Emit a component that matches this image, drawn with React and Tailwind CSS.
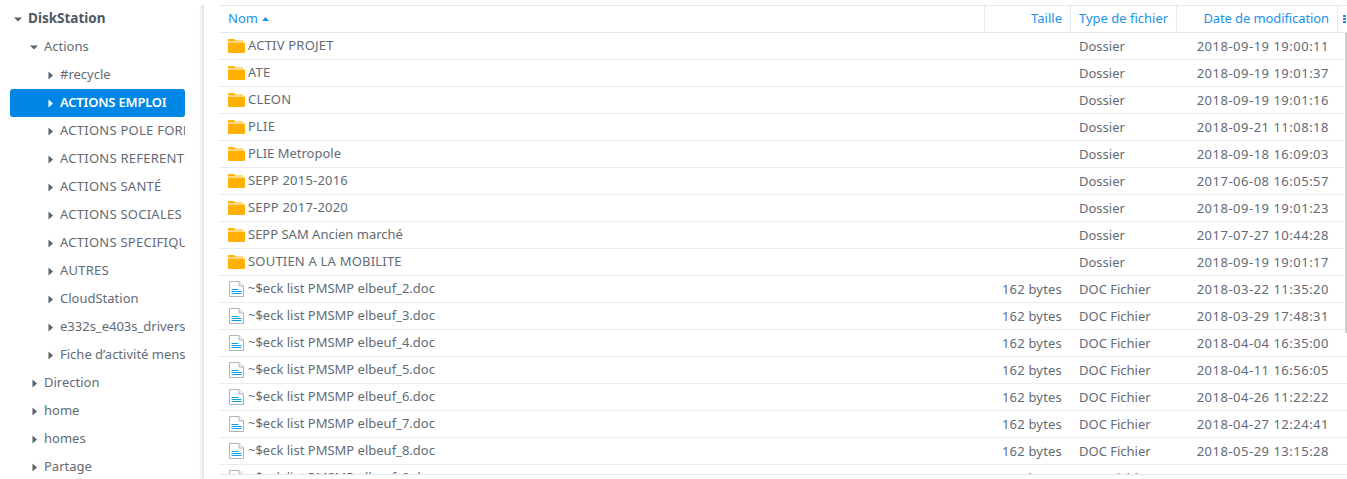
import { useState } from "react";

const tree = [
  { label: "Actions", depth: 1, open: true },
  { label: "#recycle", depth: 2 },
  { label: "ACTIONS EMPLOI", depth: 2, active: true },
  { label: "ACTIONS POLE FORMATION", depth: 2 },
  { label: "ACTIONS REFERENTS", depth: 2 },
  { label: "ACTIONS SANTÉ", depth: 2 },
  { label: "ACTIONS SOCIALES", depth: 2 },
  { label: "ACTIONS SPECIFIQUES", depth: 2 },
  { label: "AUTRES", depth: 2 },
  { label: "CloudStation", depth: 2 },
  { label: "e332s_e403s_drivers", depth: 2 },
  { label: "Fiche d’activité mensuelle", depth: 2 },
  { label: "Direction", depth: 1 },
  { label: "home", depth: 1 },
  { label: "homes", depth: 1 },
  { label: "Partage", depth: 1 },
];

const folders = [
  ["ACTIV PROJET", "2018-09-19 19:00:11"],
  ["ATE", "2018-09-19 19:01:37"],
  ["CLEON", "2018-09-19 19:01:16"],
  ["PLIE", "2018-09-21 11:08:18"],
  ["PLIE Metropole", "2018-09-18 16:09:03"],
  ["SEPP 2015-2016", "2017-06-08 16:05:57"],
  ["SEPP 2017-2020", "2018-09-19 19:01:23"],
  ["SEPP SAM Ancien marché", "2017-07-27 10:44:28"],
  ["SOUTIEN A LA MOBILITE", "2018-09-19 19:01:17"],
];

const docs = [
  ["~$eck list PMSMP elbeuf_2.doc", "2018-03-22 11:35:20"],
  ["~$eck list PMSMP elbeuf_3.doc", "2018-03-29 17:48:31"],
  ["~$eck list PMSMP elbeuf_4.doc", "2018-04-04 16:35:00"],
  ["~$eck list PMSMP elbeuf_5.doc", "2018-04-11 16:56:05"],
  ["~$eck list PMSMP elbeuf_6.doc", "2018-04-26 11:22:22"],
  ["~$eck list PMSMP elbeuf_7.doc", "2018-04-27 12:24:41"],
  ["~$eck list PMSMP elbeuf_8.doc", "2018-05-29 13:15:28"],
  ["~$eck list PMSMP elbeuf_9.doc", "2018-06-05 13:35:50"],
];

const isCaps = (s) => s === s.toUpperCase();

function Caret({ open, white }) {
  const fill = white ? "#ffffff" : "#57636f";
  return (
    <svg width="9" height="9" viewBox="0 0 9 9" className="shrink-0">
      {open ? <path d="M0 2.500h8L4 6.500z" fill={fill} /> : <path d="M2.500 0.500v8l4.500-4z" fill={fill} />}
    </svg>
  );
}

function FolderIcon() {
  return (
    <svg width="17" height="14" viewBox="0 0 17 14" className="shrink-0">
      <path d="M0 1.200C0 .5.5 0 1.200 0h4.300c.6 0 1 .3 1.300.8l.4.7H15v1H0z" fill="#ffb400" />
      <path d="M0 3.500h15.800c.7 0 1.200.5 1.200 1.200v8.100c0 .7-.5 1.200-1.200 1.200H1.200C.5 14 0 13.500 0 12.800z" fill="#ffb000" />
    </svg>
  );
}

function DocIcon() {
  return (
    <svg width="17" height="16" viewBox="0 0 17 16" className="shrink-0">
      <path d="M1.500.5h9.500l4.500 4.500v10.500H1.500z" fill="#fff" stroke="#a9b6c2" />
      <path d="M11 .5v4.500h4.500" fill="#eef2f5" stroke="#a9b6c2" />
      <path d="M3.500 8.500h7M3.500 10.500h10M3.500 12.500h10" stroke="#0c9ee8" />
    </svg>
  );
}

function Row({ icon, name, size, type, date }) {
  return (
    <div className="flex h-[27px] items-center border-b border-[#e8edf2] text-[#626b75]">
      <div className="flex w-[766px] items-center gap-[3px] pl-[9px]">
        {icon}
        <span className={`truncate pb-[2px] ${isCaps(name) ? "tracking-[0.2px]" : ""}`}>{name}</span>
      </div>
      <div className="w-[85px] pb-px pr-[8px] text-right tracking-[0.2px]">{size}</div>
      <div className="w-[106px] pb-px pl-[9px]">{type}</div>
      <div className="w-[161px] pb-px pr-[8px] text-right tracking-[0.5px]">{date}</div>
    </div>
  );
}

export default function App() {
  const [selected] = useState("ACTIONS EMPLOI");

  return (
    <div className="flex h-[479px] w-[1347px] overflow-hidden bg-white font-['Noto_Sans',sans-serif] text-[13px] leading-[18px]">
      {/* Tree */}
      <aside className="h-full w-[199px] shrink-0 pl-[10px] pt-[5px] text-[#626b75]">
        <div className="flex h-[28px] w-[175px] items-center gap-[5px] pl-[4px] text-[13.500px] font-bold text-[#4e5864]">
          <Caret open />
          <span className="pb-[2px]">DiskStation</span>
        </div>
        {tree.map((item) => (
          <div
            key={item.label}
            className={`flex h-[28px] w-[175px] items-center overflow-hidden rounded-[3px] ${
              item.label === selected ? "bg-[#0086e5] font-semibold text-white" : ""
            } ${item.depth === 1 ? "gap-[5px] pl-[20px]" : "gap-[5px] pl-[36px]"}`}
          >
            <Caret open={item.open} white={item.label === selected} />
            <span
              className={`whitespace-nowrap pb-[2px] ${
                item.label === selected ? "tracking-[-0.2px]" : isCaps(item.label) ? "tracking-[0.25px]" : ""
              }`}
            >
              {item.label}
            </span>
          </div>
        ))}
      </aside>
      <div className="mt-[5px] w-[5px] shrink-0 bg-linear-to-r from-white to-[#dfe2e5]" />

      {/* File list */}
      <main className="relative ml-[15px] flex h-[475px] flex-1 flex-col overflow-hidden pt-[5px]">
        <div className="flex h-[28px] shrink-0 items-center border-y border-[#e3eaf1] text-[#1a92e8]">
          <div className="flex h-full w-[766px] items-center gap-[4px] border-r border-[#e3eaf1] pl-[9px]">
            <span className="pb-[2px]">Nom</span>
            <svg width="7" height="4" viewBox="0 0 7 4">
              <path d="M0 4l3.500-4 3.500 4z" fill="#1a92e8" />
            </svg>
          </div>
          <div className="flex h-full w-[86px] items-center justify-end border-r border-[#e3eaf1] pb-[2px] pr-[8px]">Taille</div>
          <div className="flex h-full w-[106px] items-center border-r border-[#e3eaf1] pb-[2px] pl-[8px]">Type de fichier</div>
          <div className="flex h-full w-[161px] items-center justify-end border-r border-[#e3eaf1] pb-[2px] pr-[8px] tracking-[-0.1px]">Date de modification</div>
          <div className="ml-[5px] flex flex-col gap-[1px]">
            <span className="h-[2px] w-[3px] bg-[#1a92e8]" />
            <span className="h-[2px] w-[3px] bg-[#1a92e8]" />
            <span className="h-[2px] w-[3px] bg-[#1a92e8]" />
          </div>
        </div>
        <div className="min-h-0 flex-1 overflow-hidden border-b border-[#e3e6e9]">
          {folders.map(([name, date]) => (
            <Row key={name} icon={<FolderIcon />} name={name} type="Dossier" date={date} />
          ))}
          {docs.map(([name, date]) => (
            <Row key={name} icon={<DocIcon />} name={name} size="162 bytes" type="DOC Fichier" date={date} />
          ))}
        </div>
        {/* scrollbar thumb */}
        <div className="absolute right-0 top-[33px] h-[300px] w-[2px] bg-[#cfcfcf]" />
      </main>
    </div>
  );
}
